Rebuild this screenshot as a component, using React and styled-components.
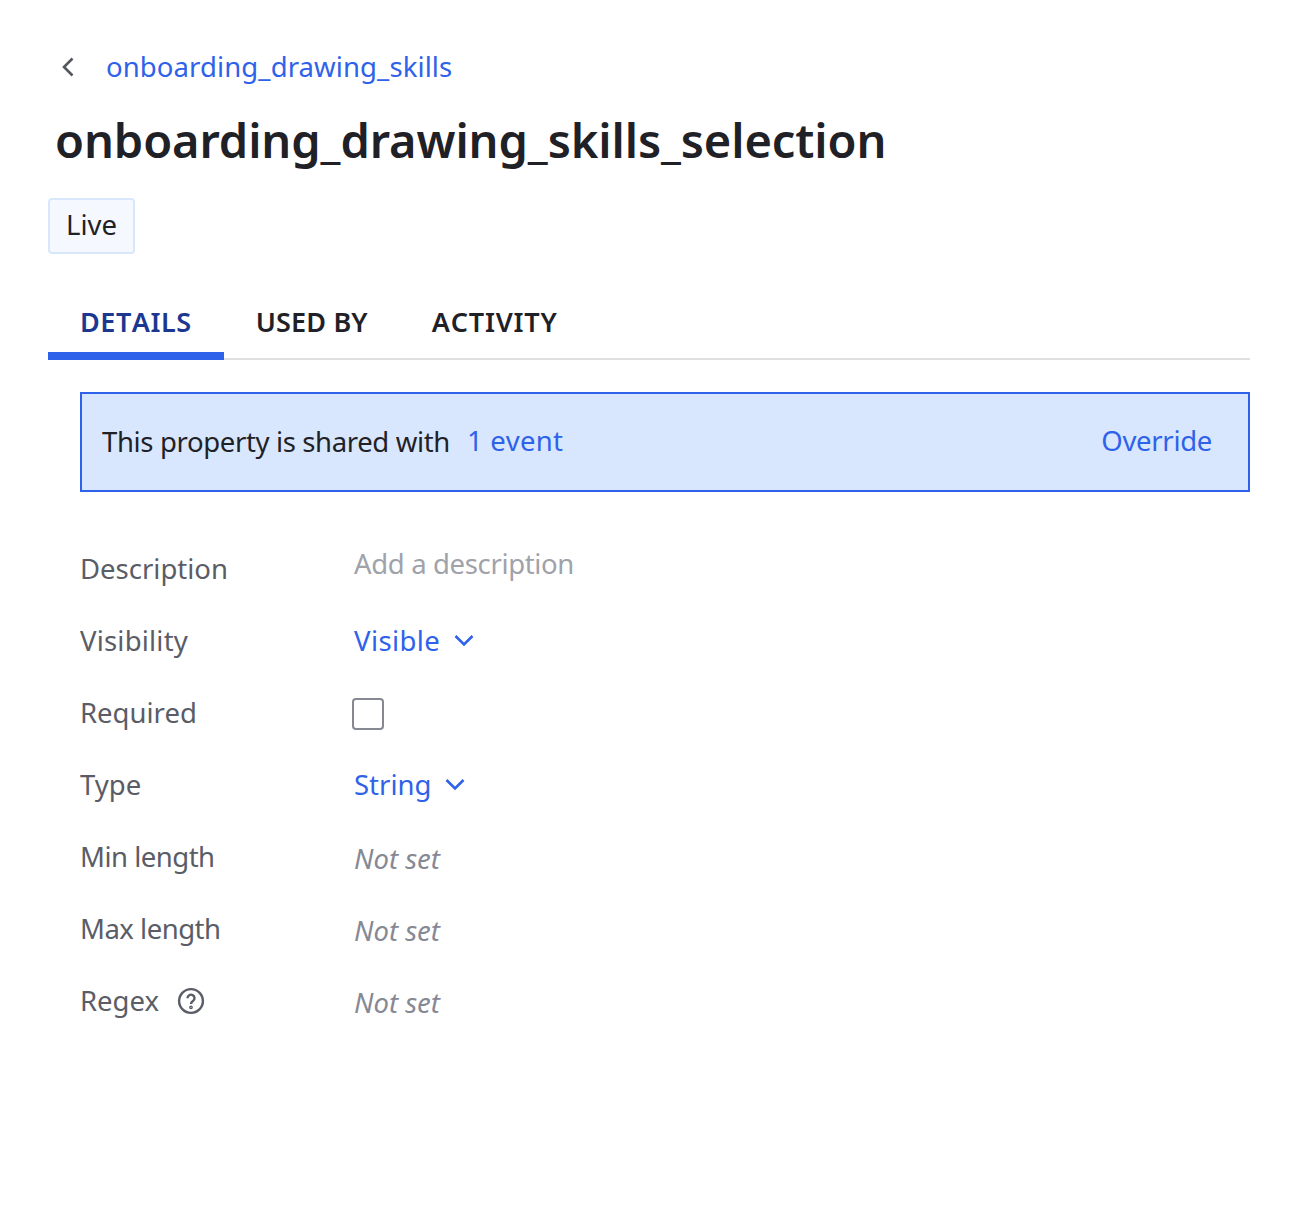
import React from 'react'
import styled, { createGlobalStyle } from 'styled-components'

const GlobalStyle = createGlobalStyle`
  html, body {
    margin: 0;
    background: #ffffff;
    font-family: "Noto Sans", "Liberation Sans", sans-serif;
    color: #1f2126;
  }
`

const BLUE = '#2f62ea'

const Page = styled.div`
  box-sizing: border-box;
  width: 1298px;
  height: 1226px;
  padding: 48px 48px 0;
`

const Breadcrumb = styled.div`
  display: flex;
  align-items: center;
  height: 38px;
  margin-left: 10px;
`

const BackIcon = styled.svg`
  width: 24px;
  height: 24px;
  margin-right: 24px;
  fill: none;
  stroke: #55575f;
  stroke-width: 2.6;
`

const ParentLink = styled.a`
  color: ${BLUE};
  font-size: 27.5px;
  letter-spacing: 0.1px;
  line-height: 38px;
`

const Title = styled.h1`
  margin: 24px 0 0 7px;
  font-size: 47px;
  font-weight: 600;
  line-height: 60px;
  letter-spacing: -0.09px;
  color: #1f2126;
`

const Badge = styled.div`
  box-sizing: border-box;
  display: flex;
  align-items: center;
  justify-content: center;
  width: 87px;
  height: 56px;
  margin-top: 28px;
  padding-bottom: 3px;
  background: #f5f9ff;
  border: 2px solid #d9e7fd;
  border-radius: 4px;
  font-size: 27.5px;
`

const TabBar = styled.div`
  box-sizing: border-box;
  display: flex;
  height: 76px;
  margin-top: 30px;
  border-bottom: 2px solid #dfdfe2;
`

const Tab = styled.div`
  box-sizing: border-box;
  height: 76px;
  padding: 0 32px;
  font-size: 27px;
  font-weight: 600;
  font-kerning: none;
  line-height: 76px;
  letter-spacing: ${(props) => props.$spacing}px;
  color: ${(props) => (props.$active ? '#1c378f' : '#1f2126')};
  border-bottom: ${(props) => (props.$active ? `8px solid ${BLUE}` : 'none')};
`

const Content = styled.div`
  margin: 32px 0 0 32px;
`

const Banner = styled.div`
  box-sizing: border-box;
  display: flex;
  align-items: center;
  height: 100px;
  padding: 0 36px 2px 20px;
  background: #d8e7fd;
  border: 2px solid ${BLUE};
  font-size: 27.5px;
  letter-spacing: -0.36px;
`

const BannerLink = styled.a`
  color: ${BLUE};
  letter-spacing: ${(props) => (props.$push ? '-0.3px' : '0.3px')};
  margin-left: ${(props) => (props.$push ? 'auto' : '17px')};
  margin-bottom: 2px;
`

const Rows = styled.div`
  margin-top: 40px;
`

const Row = styled.div`
  display: grid;
  grid-template-columns: 274px 1fr;
  align-items: center;
  height: 72px;
  font-size: 27.5px;
`

const Label = styled.div`
  display: flex;
  align-items: center;
  gap: 18px;
  color: #5a5c66;
  letter-spacing: ${(props) => (props.$spacing ? `${props.$spacing}px` : '0')};
`

const Placeholder = styled.div`
  color: #a0a2aa;
  letter-spacing: -0.35px;
  margin-top: -10px;
`

const Select = styled.a`
  display: flex;
  align-items: center;
  gap: 14px;
  color: ${BLUE};
  letter-spacing: ${(props) => (props.$wide ? '0.4px' : '0')};
`

const Chevron = styled.svg`
  width: 20px;
  height: 20px;
  fill: none;
  stroke: ${BLUE};
  stroke-width: 2.6;
`

const Checkbox = styled.div`
  box-sizing: border-box;
  width: 32px;
  height: 32px;
  margin: 4px 0 0 -2px;
  border: 2px solid #868893;
  border-radius: 4px;
  background: #ffffff;
`

const NotSet = styled.div`
  color: #868893;
  font-style: italic;
  margin-top: 4px;
`

const HelpIcon = styled.svg`
  width: 28px;
  height: 28px;
  margin-top: 2px;
  fill: none;
  stroke: #5a5c66;
  stroke-width: 2.4;
`

const App = () => (
  <>
    <GlobalStyle />
    <Page>
      <Breadcrumb>
        <BackIcon viewBox="0 0 24 24">
          <path d="M14.500 3.500 6 12l8.500 8.500" />
        </BackIcon>
        <ParentLink>onboarding_drawing_skills</ParentLink>
      </Breadcrumb>
      <Title>onboarding_drawing_skills_selection</Title>
      <Badge>Live</Badge>
      <TabBar>
        <Tab $active $spacing={0.55}>DETAILS</Tab>
        <Tab $spacing={0.15}>USED BY</Tab>
        <Tab $spacing={0.8}>ACTIVITY</Tab>
      </TabBar>
      <Content>
        <Banner>
          This property is shared with
          <BannerLink>1 event</BannerLink>
          <BannerLink $push>Override</BannerLink>
        </Banner>
        <Rows>
          <Row>
            <Label>Description</Label>
            <Placeholder>Add a description</Placeholder>
          </Row>
          <Row>
            <Label $spacing={0.2}>Visibility</Label>
            <Select $wide>
              Visible
              <Chevron viewBox="0 0 20 20">
                <path d="M1.500 6 10 14.500 18.500 6" />
              </Chevron>
            </Select>
          </Row>
          <Row>
            <Label>Required</Label>
            <Checkbox />
          </Row>
          <Row>
            <Label>Type</Label>
            <Select>
              String
              <Chevron viewBox="0 0 20 20">
                <path d="M1.500 6 10 14.500 18.500 6" />
              </Chevron>
            </Select>
          </Row>
          <Row>
            <Label $spacing={-0.5}>Min length</Label>
            <NotSet>Not set</NotSet>
          </Row>
          <Row>
            <Label $spacing={-0.5}>Max length</Label>
            <NotSet>Not set</NotSet>
          </Row>
          <Row>
            <Label>
              Regex
              <HelpIcon viewBox="0 0 28 28">
                <circle cx="14" cy="14" r="11.900" />
                <path d="M10.500 11.200a3.500 3.500 0 1 1 5.400 2.900c-1.200.8-1.900 1.500-1.900 2.900" />
                <circle cx="14" cy="20.300" r="0.700" />
              </HelpIcon>
            </Label>
            <NotSet>Not set</NotSet>
          </Row>
        </Rows>
      </Content>
    </Page>
  </>
)

export default App
